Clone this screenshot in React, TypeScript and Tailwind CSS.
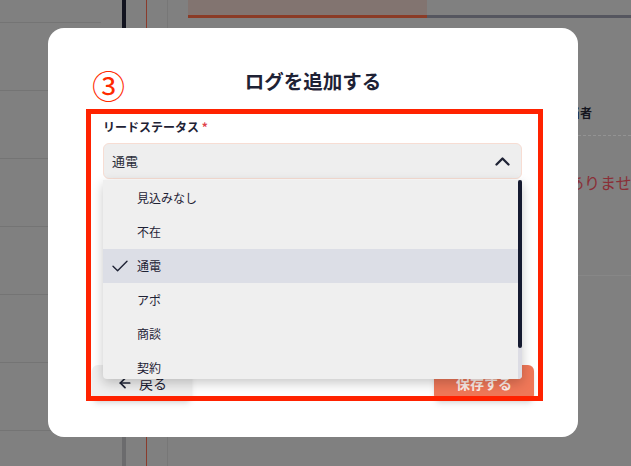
import React from "react";
import { ArrowLeft } from "lucide-react";

// --- options shown in the open select ---
const statuses = ["見込みなし", "不在", "通電", "アポ", "商談", "契約"];

const ChevronUpIcon = () => (
  <svg width="15" height="9" viewBox="0 0 15 9" fill="none">
    <path d="M1.5 7.5 7.5 1.5l6 6" stroke="#1f2335" strokeWidth="2.3" strokeLinecap="round" strokeLinejoin="round" />
  </svg>
);

const CheckIcon = () => (
  <svg width="16" height="12" viewBox="0 0 16 12" fill="none">
    <path d="M1 6.2 5.6 10.8 15 1.2" stroke="#1f2335" strokeWidth="1.4" strokeLinecap="round" strokeLinejoin="round" />
  </svg>
);

// --- dimmed page behind the dialog ---
const BackgroundPage = () => (
  <div className="flex h-full w-full">
    <div className="flex w-[101px] flex-col">
      <div className="h-[23px] border-b border-[#747474]" />
      {Array.from({ length: 6 }).map((_, i) => (
        <div key={i} className="h-[68px] border-b border-[#747474]" />
      ))}
    </div>
    <div className="ml-[21px] flex w-[4px] flex-col">
      <div className="h-[30px] bg-[#12131f]" />
      <div className="flex-1 bg-[#6b6b6d]" />
    </div>
    <div className="ml-[20px] w-px bg-[#8a3b2c]" />
    <div className="ml-[20px] w-px bg-[#777777]" />
    <div className="ml-[20px] flex flex-1 flex-col">
      <div className="flex">
        <div className="h-[18px] w-[239px] border-b-[3px] border-[#8b3b26] bg-[#827470]" />
        <div className="h-[18px] flex-1 border-b-[3px] border-[#55565f]" />
      </div>
      <div className="flex flex-col items-end">
        <div className="mt-[86px] w-[100px] pr-[39px] text-right text-[12px] font-bold text-[#15161f]">担当者</div>
        <div className="mt-[13px] w-full border-b border-dashed border-[#939393]" />
        <div className="mt-[34px] w-[63px] whitespace-nowrap text-[16px] text-[#8a2f37]">ありません</div>
        <div className="mt-[81px] w-full border-b border-[#878787]" />
      </div>
    </div>
  </div>
);

export default function App() {
  return (
    <div className="relative h-[466px] w-[631px] overflow-hidden bg-[#808080] font-['Noto_Sans_CJK_JP','Noto_Sans',sans-serif]">
      <BackgroundPage />

      {/* dialog */}
      <div className="absolute left-[48px] top-[28px] flex h-[409px] w-[530px] flex-col rounded-2xl bg-white px-[44px] pb-[36px]">
        <h2 className="pt-[39px] text-center text-[19.5px] font-bold leading-[28px] text-[#1e2235]">ログを追加する</h2>

        <div className="mx-[11px] mt-[24px] mr-[12px]">
          <div className="text-[12px] font-bold leading-[16px] text-[#1e2235]">
            リードステータス <span className="text-[#e0424c]">*</span>
          </div>
          <div className="relative mt-[8px]">
            <div className="flex h-[36px] items-center justify-between rounded-md border border-[#f7ddd3] bg-[#eeeeee] pl-[8px] pr-[11px]">
              <span className="text-[13px] text-[#2a2d3a]">通電</span>
              <ChevronUpIcon />
            </div>

            {/* open listbox */}
            <div className="absolute left-0 top-[37px] z-20 flex h-[199px] w-full overflow-hidden rounded-b bg-[#efefef] shadow-[0_4px_12px_rgba(0,0,0,0.22)]">
              <div className="flex-1 pt-[1px]">
                {statuses.map((s) => (
                  <div
                    key={s}
                    className={`flex h-[34px] items-center text-[12px] text-[#1e2235] ${s === "通電" ? "bg-[#dcdee6]" : ""}`}
                  >
                    <div className="flex w-[34px] pl-[9px]">{s === "通電" && <CheckIcon />}</div>
                    <span>{s}</span>
                  </div>
                ))}
              </div>
              <div className="flex w-[4px] flex-col bg-[#dcdce4]">
                <div className="h-[168px] rounded-full bg-[#151a30]" />
              </div>
            </div>
          </div>
        </div>

        <div className="mt-auto flex justify-between">
          <button className="flex h-[36px] w-[100px] items-center justify-center gap-[6px] rounded-md bg-[#efefef] text-[14px] text-[#1e2235] shadow-md">
            <ArrowLeft size={16} strokeWidth={2.6} />
            戻る
          </button>
          <button className="h-[36px] w-[100px] rounded-md bg-[#ef7758] text-[14px] font-bold text-[#fdeee9] shadow-md">
            保存する
          </button>
        </div>

        {/* annotation */}
        <div className="pointer-events-none absolute left-[38px] top-[81px] z-10 h-[292px] w-[457px] border-[5px] border-[#ff2200]" />
        <div className="pointer-events-none absolute left-[44px] top-[37px] text-[33px] leading-[40px] text-[#ff2a00]">③</div>
      </div>
    </div>
  );
}
